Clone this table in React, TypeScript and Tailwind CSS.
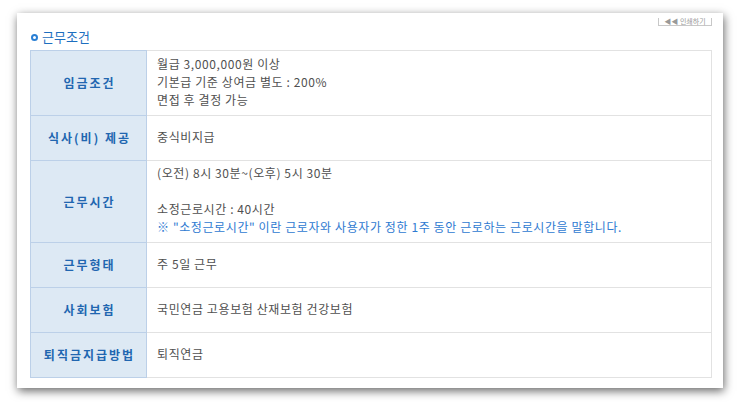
const rows: { label: string; height: string; lines: { text: string; note?: boolean }[] }[] = [
    {
        label: '임금조건',
        height: 'h-[65px]',
        lines: [
            { text: '월급 3,000,000원 이상' },
            { text: '기본급 기준 상여금 별도 : 200%' },
            { text: '면접 후 결정 가능' },
        ],
    },
    { label: '식사(비) 제공', height: 'h-[45px]', lines: [{ text: '중식비지급' }] },
    {
        label: '근무시간',
        height: 'h-[82px]',
        lines: [
            { text: '(오전) 8시 30분~(오후) 5시 30분' },
            { text: '\u00a0' },
            { text: '소정근로시간 : 40시간' },
            {
                text: '※ "소정근로시간" 이란 근로자와 사용자가 정한 1주 동안 근로하는 근로시간을 말합니다.',
                note: true,
            },
        ],
    },
    { label: '근무형태', height: 'h-[45px]', lines: [{ text: '주 5일 근무' }] },
    {
        label: '사회보험',
        height: 'h-[45px]',
        lines: [{ text: '국민연금 고용보험 산재보험 건강보험' }],
    },
    { label: '퇴직금지급방법', height: 'h-[45px]', lines: [{ text: '퇴직연금' }] },
];

export default function App() {
    return (
        <div
            className="h-[402px] w-[740px] overflow-hidden bg-white pl-[17px] pt-[13px]"
            style={{ fontFamily: '"Noto Sans CJK KR", "Noto Sans", sans-serif' }}
        >
            <div className="h-[375px] w-[706px] overflow-hidden bg-white pl-[13px] pr-[11px] shadow-[1px_3px_9px_rgba(0,0,0,0.6)]">
                {/* small top button */}
                <div className="mt-[5px] flex justify-end">
                    <div className="flex h-[8px] w-[54px] items-end justify-center border-x border-b border-[#c8c8c8]">
                        <span className="text-[7px] leading-[8px] text-[#999]">◀◀ 인쇄하기</span>
                    </div>
                </div>

                <div className="mt-[3px] mb-[5px] flex h-[16px] items-center gap-[4px]">
                    <span className="ml-[1px] h-[7px] w-[7px] rounded-full border-2 border-[#2a7fd4]" />
                    <span className="text-[13px] leading-[16px] text-[#1d6fbf]">근무조건</span>
                </div>

                <table className="w-[682px] border-collapse text-[12px]">
                    <tbody>
                        {rows.map((row) => (
                            <tr key={row.label} className={row.height}>
                                <td className="w-[116px] border border-[#bcd0e8] bg-[#dde9f4] p-0 pl-[2px] text-center font-bold tracking-[2px] text-[#2166b0]">
                                    {row.label}
                                </td>
                                <td className="border border-[#e2e2e2] px-[10px] pt-0 pb-[3px] leading-[18px] tracking-[0.6px] text-[#505050]">
                                    {row.lines.map((line, i) => (
                                        <div
                                            key={i}
                                            className={line.note ? 'text-[#2e7ad1]' : ''}
                                        >
                                            {line.text}
                                        </div>
                                    ))}
                                </td>
                            </tr>
                        ))}
                    </tbody>
                </table>
            </div>
        </div>
    );
}
